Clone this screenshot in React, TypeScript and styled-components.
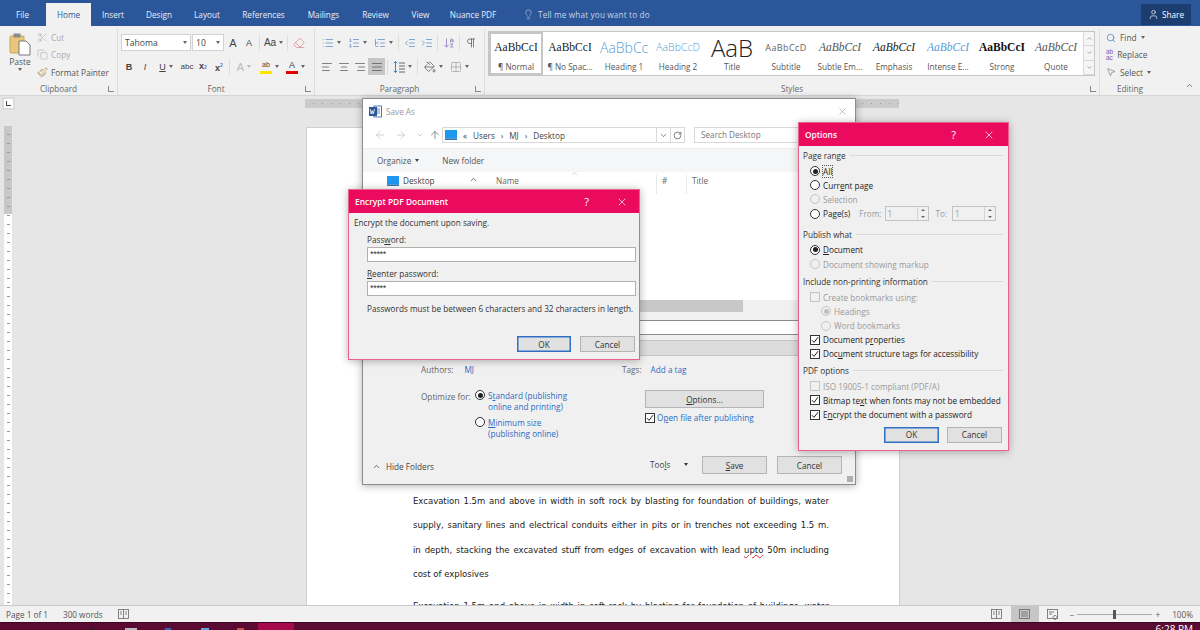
import React from 'react';
import styled, { createGlobalStyle } from 'styled-components';
import {
  AlignCenter, AlignJustify, AlignLeft, AlignRight, ArrowDownAZ, ArrowLeft, ArrowRight, ArrowUp,
  ChevronDown, ChevronUp, Copy, Eraser, Grid2x2, IndentDecrease, IndentIncrease, Lightbulb, List,
  ListOrdered, ListTree, MousePointer2, PaintBucket, Paintbrush, Pilcrow, RotateCw, Scissors, Search, User, X,
} from 'lucide-react';

const UI = `"Open Sans", "Noto Sans", sans-serif`;
const SERIF = `"Liberation Serif", serif`;
const PINK = '#ea0a5e';

const Global = createGlobalStyle`
  html, body { margin: 0; padding: 0; overflow: hidden; background: #e6e6e6; }
  * { box-sizing: border-box; }
  u { text-underline-offset: 1px; text-decoration-thickness: 1px; }
`;

const Shell = styled.div`
  position: relative;
  width: 1200px;
  height: 630px;
  display: flex;
  flex-direction: column;
  overflow: hidden;
  font-family: ${UI};
  color: #333;
`;

/* tabs */
const TabBar = styled.div`
  height: 26px;
  flex: none;
  background: #2b579a;
  display: flex;
  align-items: flex-end;
  padding-left: 15px;
  font-size: 8.2px;
  color: #e8eef7;
`;
const Tab = styled.div<{ $active?: boolean; $w: number }>`
  width: ${p => p.$w}px;
  height: ${p => (p.$active ? 23 : 26)}px;
  display: flex;
  align-items: center;
  justify-content: center;
  flex: none;
  padding-top: ${p => (p.$active ? 0 : 3)}px;
  ${p => p.$active && 'background:#f1f1f1;color:#2b579a;'}
`;
const TellMe = styled.div`
  margin-left: 18px;
  height: 26px;
  padding-top: 3px;
  display: flex;
  align-items: center;
  gap: 4px;
  letter-spacing: .15px;
  color: #c6d3e8;
`;
const ShareBtn = styled.div`
  margin-left: auto;
  margin-right: 9px;
  width: 50px;
  height: 21px;
  margin-bottom: 1px;
  background: #1b3d70;
  display: flex;
  align-items: center;
  justify-content: center;
  gap: 3px;
  color: #fff;
`;

/* ribbon */
const Ribbon = styled.div`
  position: relative;
  height: 70px;
  flex: none;
  background: #f1f1f1;
  border-bottom: 1px solid #d4d4d4;
  display: flex;
  font-size: 8.3px;
  color: #555;
`;
const Group = styled.div<{ $w: number; $noline?: boolean }>`
  width: ${p => p.$w}px;
  flex: none;
  position: relative;
  margin: 3px 0 0;
  display: flex;
  flex-direction: column;
  border-right: ${p => (p.$noline ? 'none' : '1px solid #dcdcdc')};
`;
const GroupBody = styled.div`
  flex: 1;
  min-height: 0;
  display: flex;
`;
const GroupLabel = styled.div`
  height: 14px;
  text-align: center;
  font-size: 8.2px;
  line-height: 15px;
  color: #666;
`;
const Launcher = styled.span`
  position: absolute;
  right: 3px;
  bottom: 3px;
  width: 6px;
  height: 6px;
  border-left: 1px solid #888;
  border-bottom: 1px solid #888;
`;
const PasteCol = styled.div`
  width: 34px;
  margin-left: 3px;
  display: flex;
  flex-direction: column;
  align-items: center;
  padding-top: 3px;
  font-size: 8.4px;
  line-height: 12px;
`;
const ClipCol = styled.div`
  display: flex;
  flex-direction: column;
  padding-top: 0;
`;
const ClipItem = styled.div<{ $off?: boolean }>`
  height: 17.5px;
  display: flex;
  align-items: center;
  gap: 3px;
  color: ${p => (p.$off ? '#aaa' : '#555')};
`;
const ToolCol = styled.div`
  display: flex;
  flex-direction: column;
  padding: 5px 0 0 3px;
  gap: 7px;
`;
const ToolRow = styled.div`
  display: flex;
  align-items: center;
  height: 17px;
`;
const Combo = styled.div<{ $w: number }>`
  width: ${p => p.$w}px;
  height: 17px;
  flex: none;
  margin-right: 1px;
  background: #fff;
  border: 1px solid #d2d2d2;
  display: flex;
  align-items: center;
  justify-content: space-between;
  padding: 0 3px;
  font-size: 8.6px;
  color: #444;
`;
const Caret = styled.span<{ $c?: string }>`
  display: inline-block;
  width: 0;
  height: 0;
  flex: none;
  border-left: 2.5px solid transparent;
  border-right: 2.5px solid transparent;
  border-top: 3px solid ${p => p.$c || '#666'};
`;
const Tool = styled.div<{ $w?: number; $active?: boolean }>`
  width: ${p => p.$w || 16}px;
  height: 17px;
  flex: none;
  display: flex;
  align-items: center;
  justify-content: center;
  gap: 3px;
  color: #444;
  font-size: 9px;
  background: ${p => (p.$active ? '#c6c6c6' : 'transparent')};
`;
const Letter = styled.span<{ $b?: boolean; $i?: boolean; $u?: boolean; $s?: number; $c?: string }>`
  font-family: "Liberation Sans", sans-serif;
  font-size: ${p => p.$s || 9}px;
  font-weight: ${p => (p.$b ? 700 : 400)};
  font-style: ${p => (p.$i ? 'italic' : 'normal')};
  text-decoration: ${p => (p.$u ? 'underline' : 'none')};
  color: ${p => p.$c || '#444'};
  line-height: 10px;
`;
const Tiny = styled.span`
  font-size: 5px;
  color: #4a7cc0;
`;
const Swatch = styled.div<{ $c: string }>`
  display: flex;
  flex-direction: column;
  align-items: center;
  width: 12px;
  &::after { content: ''; width: 12px; height: 3px; margin-top: 1px; background: ${p => p.$c}; }
`;
const ToolSep = styled.div`
  width: 1px;
  height: 16px;
  flex: none;
  background: #dcdcdc;
  margin: 0 2px;
`;
const Gallery = styled.div`
  margin: 2px 0 0 3px;
  width: 607px;
  height: 45px;
  display: flex;
  background: #fff;
  border: 1px solid #c6c6c6;
`;
const StyleCell = styled.div<{ $active?: boolean }>`
  width: 54px;
  flex: none;
  overflow: hidden;
  display: flex;
  flex-direction: column;
  align-items: center;
  border: ${p => (p.$active ? '2px solid #c6c6c6' : '2px solid transparent')};
`;
const Sample = styled.div<{ $f: string; $s: number; $c: string; $i?: boolean; $b?: boolean; $sp?: number; $light?: boolean }>`
  height: 25px;
  width: 48px;
  overflow: hidden;
  white-space: nowrap;
  text-align: center;
  font-family: ${p => p.$f};
  font-size: ${p => p.$s}px;
  color: ${p => p.$c};
  font-style: ${p => (p.$i ? 'italic' : 'normal')};
  font-weight: ${p => (p.$b ? 700 : p.$light ? 300 : 400)};
  letter-spacing: ${p => p.$sp || 0}px;
  line-height: 25px;
  margin-top: 1px;
`;
const StyleName = styled.div`
  font-size: 8.2px;
  color: #555;
  white-space: nowrap;
  line-height: 13px;
`;
const GalleryScroll = styled.div`
  margin-left: auto;
  width: 11px;
  display: flex;
  flex-direction: column;
  color: #777;
  background: #f5f5f5;
  border-left: 1px solid #d8d8d8;
`;
const ScrollCell = styled.div`
  flex: 1;
  display: flex;
  align-items: center;
  justify-content: center;
  border-bottom: 1px solid #d8d8d8;
`;
const EditCol = styled.div`
  display: flex;
  flex-direction: column;
  padding: 0 0 0 6px;
`;
const EditItem = styled.div`
  height: 17.5px;
  display: flex;
  align-items: center;
  gap: 4px;
  color: #555;
`;
const AbStack = styled.span`
  display: flex;
  flex-direction: column;
  font-family: "Liberation Sans", sans-serif;
  font-size: 6.5px;
  line-height: 6px;
  color: #7a5cb0;
`;
const Collapse = styled.div`
  position: absolute;
  right: 6px;
  bottom: 5px;
  color: #555;
  display: flex;
`;

/* workspace */
const Workspace = styled.div`
  flex: 1;
  min-height: 0;
  background: #e6e6e6;
  display: flex;
  flex-direction: column;
  overflow: hidden;
`;
const RulerRow = styled.div`
  height: 14px;
  flex: none;
  display: flex;
  align-items: center;
  padding-left: 2px;
`;
const CornerBox = styled.div`
  width: 13px;
  height: 13px;
  background: #fff;
  border: 2px solid #dcdcdc;
  display: flex;
  align-items: flex-end;
  justify-content: center;
  padding-bottom: 2px;
  &::after { content: ''; width: 4px; height: 4px; border-left: 1px solid #444; border-bottom: 1px solid #444; }
`;
const HRuler = styled.div`
  margin-left: 290px;
  width: 594px;
  height: 9px;
  background:
    repeating-linear-gradient(90deg, transparent 0 8px, #9a9a9a 8px 9px) 0 4px / 100% 1px no-repeat,
    #cbcbcb;
`;
const DocRow = styled.div`
  flex: 1;
  min-height: 0;
  display: flex;
`;
const VRuler = styled.div`
  margin: 16px 0 0 4px;
  width: 8px;
  flex: none;
  background:
    repeating-linear-gradient(180deg, transparent 0 8px, #9a9a9a 8px 9px) 3px 0 / 3px 100% no-repeat,
    linear-gradient(180deg, #c8c8c8 0 88px, #fff 88px);
`;
const Page = styled.div`
  margin: 17px 0 0 294px;
  width: 594px;
  flex: none;
  background: #fff;
  border: 1px solid #d0d0d0;
  border-bottom: none;
  padding: 361px 70px 0 106px;
  font-family: "DejaVu Sans", sans-serif;
  font-size: 8.5px;
  line-height: 24.4px;
  color: #222;
  overflow: hidden;
`;
const Para = styled.p`
  margin: 0 0 7px;
`;
const Line = styled.span<{ $last?: boolean }>`
  display: block;
  text-align: ${p => (p.$last ? 'left' : 'justify')};
  text-align-last: ${p => (p.$last ? 'left' : 'justify')};
`;
const Squiggle = styled.span`
  text-decoration: underline wavy #d22;
  text-decoration-thickness: 1px;
`;

/* status + taskbar */
const StatusBar = styled.div`
  height: 17px;
  flex: none;
  background: #f1f1f1;
  border-top: 1px solid #c8c8c8;
  display: flex;
  align-items: center;
  padding-left: 6px;
  font-size: 8.2px;
  color: #555;
`;
const StatusItem = styled.span<{ $ml?: number; $mr?: number }>`
  display: flex;
  margin-left: ${p => p.$ml || 0}px;
  margin-right: ${p => p.$mr || 0}px;
`;
const StatusRight = styled.div`
  margin-left: auto;
  display: flex;
  align-items: center;
  height: 100%;
`;
const ViewBtn = styled.div<{ $active?: boolean }>`
  width: 28px;
  height: 100%;
  display: flex;
  align-items: center;
  justify-content: center;
  background: ${p => (p.$active ? '#c6c6c6' : 'transparent')};
`;
const ZoomTrack = styled.div`
  position: relative;
  width: 75px;
  height: 1px;
  background: #aaa;
  margin: 0 3px;
  &::after { content: ''; position: absolute; left: 36px; top: -4px; width: 3px; height: 9px; background: #555; }
`;
const Taskbar = styled.div`
  height: 8px;
  flex: none;
  background: #5a0a33;
  border-top: 1px solid #3d0722;
  display: flex;
  align-items: flex-start;
  font-size: 10px;
  color: #fff;
`;
const TaskDot = styled.span<{ $ml: number; $w: number; $c: string }>`
  margin: 5px 0 0 ${p => p.$ml}px;
  width: ${p => p.$w}px;
  height: 2px;
  flex: none;
  background: ${p => p.$c};
`;
const TaskActive = styled.div`
  margin-left: 14px;
  width: 36px;
  height: 8px;
  position: relative;
  background: #a60a4c;
`;
const Clock = styled.div`
  margin-left: auto;
  margin-right: 7px;
  line-height: 13px;
`;

/* windows */
const Win = styled.div<{ $x: number; $y: number; $w: number; $h: number; $pink?: boolean }>`
  position: absolute;
  left: ${p => p.$x}px;
  top: ${p => p.$y}px;
  width: ${p => p.$w}px;
  height: ${p => p.$h}px;
  background: #f0f0f0;
  border: 1px solid ${p => (p.$pink ? '#e8628a' : '#8d8d8d')};
  box-shadow: 0 1px 8px rgba(0, 0, 0, .3);
  display: flex;
  flex-direction: column;
  font-size: 8.2px;
  color: #333;
  overflow: hidden;
`;
const PinkBar = styled.div`
  height: 23px;
  flex: none;
  background: ${PINK};
  color: #fff;
  display: flex;
  align-items: center;
  padding-left: 6px;
  font-size: 8.4px;
  font-weight: 600;
`;
const BarHelp = styled.span<{ $mr: number }>`
  margin-left: auto;
  margin-right: ${p => p.$mr}px;
  font-size: 11px;
  font-weight: 400;
`;
const BarClose = styled.span<{ $mr: number }>`
  display: flex;
  margin-right: ${p => p.$mr}px;
`;
const Btn = styled.div<{ $w: number; $h?: number; $def?: boolean }>`
  width: ${p => p.$w}px;
  height: ${p => p.$h || 16}px;
  flex: none;
  background: #e1e1e1;
  border: ${p => (p.$def ? '1px solid #2f6fc4' : '1px solid #b4b4b4')};
  box-shadow: ${p => (p.$def ? 'inset 0 0 0 .5px #2f6fc4' : 'none')};
  display: flex;
  align-items: center;
  justify-content: center;
  color: #333;
`;

/* encrypt */
const EncBody = styled.div`
  flex: 1;
  padding: 4px 4px 0 5px;
  display: flex;
  flex-direction: column;
`;
const EncFields = styled.div`
  padding: 6px 0 0 13px;
  display: flex;
  flex-direction: column;
`;
const Label = styled.div`
  line-height: 12px;
`;
const PwInput = styled.div`
  width: 269px;
  height: 15px;
  margin: 1px 0 6px;
  background: #fff;
  border: 1px solid #b0b0b0;
  padding-left: 2px;
  font-family: "Liberation Sans", sans-serif;
  font-size: 9px;
  line-height: 13px;
  letter-spacing: -.3px;
`;
const Note = styled.div`
  margin-top: 1px;
  white-space: nowrap;
`;
const BtnRow = styled.div<{ $gap: number; $mr: number; $mt: number }>`
  display: flex;
  justify-content: flex-end;
  gap: ${p => p.$gap}px;
  margin: ${p => p.$mt}px ${p => p.$mr}px 0 0;
`;

/* options */
const OptBody = styled.div`
  flex: 1;
  padding: 3px 5px 0 4px;
  display: flex;
  flex-direction: column;
`;
const Legend = styled.div<{ $mt?: number }>`
  display: flex;
  align-items: center;
  gap: 4px;
  height: 13px;
  margin: ${p => p.$mt || 0}px 0 2px;
  white-space: nowrap;
  &::after { content: ''; flex: 1; height: 1px; background: #d8d8d8; }
`;
const OptRow = styled.div<{ $in?: number; $off?: boolean }>`
  height: 14.2px;
  display: flex;
  align-items: center;
  gap: 3px;
  padding-left: ${p => p.$in ?? 7}px;
  white-space: nowrap;
  color: ${p => (p.$off ? '#9a9a9a' : '#222')};
`;
const Radio = styled.span<{ $on?: boolean; $off?: boolean; $dim?: boolean }>`
  width: 10px;
  height: 10px;
  flex: none;
  border-radius: 50%;
  background: ${p => (p.$off ? '#f0f0f0' : '#fff')};
  border: 1px solid ${p => (p.$off ? '#c4c4c4' : '#333')};
  display: flex;
  align-items: center;
  justify-content: center;
  &::after {
    content: '';
    width: 5px;
    height: 5px;
    border-radius: 50%;
    background: ${p => (p.$on ? (p.$dim ? '#c0c0c0' : '#222') : 'transparent')};
  }
`;
const Check = styled.span<{ $off?: boolean }>`
  width: 10px;
  height: 10px;
  flex: none;
  background: ${p => (p.$off ? '#f0f0f0' : '#fff')};
  border: 1px solid ${p => (p.$off ? '#c4c4c4' : '#333')};
  display: flex;
  align-items: center;
  justify-content: center;
`;
const FocusText = styled.span`
  outline: 1px dotted #555;
`;
const SpinLabel = styled.span<{ $ml: number }>`
  color: #9a9a9a;
  margin-left: ${p => p.$ml}px;
`;
const Spin = styled.div<{ $ml?: number }>`
  width: 44px;
  height: 15px;
  margin-left: ${p => p.$ml || 0}px;
  background: #f0f0f0;
  border: 1px solid #c4c4c4;
  color: #9a9a9a;
  display: flex;
  align-items: center;
  padding-left: 2px;
`;
const SpinBtns = styled.span`
  margin-left: auto;
  width: 11px;
  height: 100%;
  display: flex;
  flex-direction: column;
  border-left: 1px solid #d4d4d4;
`;
const SpinBtn = styled.span<{ $up?: boolean }>`
  flex: 1;
  display: flex;
  align-items: center;
  justify-content: center;
  &::after {
    content: '';
    border-left: 2px solid transparent;
    border-right: 2px solid transparent;
    ${p => (p.$up ? 'border-bottom: 2.5px solid #666;' : 'border-top: 2.5px solid #666;')}
  }
`;

/* save as */
const SaveTitle = styled.div`
  height: 25px;
  flex: none;
  background: #fff;
  display: flex;
  align-items: center;
  padding-left: 6px;
  gap: 4px;
  color: #999;
`;
const SaveClose = styled.span`
  margin-left: auto;
  margin-right: 7px;
  display: flex;
  color: #777;
`;
const AddrRow = styled.div`
  height: 24px;
  flex: none;
  background: #fff;
  display: flex;
  align-items: center;
  padding: 0 0 2px 7px;
  color: #bbb;
`;
const NavBtn = styled.span<{ $w: number; $c?: string }>`
  width: ${p => p.$w}px;
  flex: none;
  display: flex;
  justify-content: center;
  color: ${p => p.$c || '#bbb'};
`;
const AddrBox = styled.div`
  width: 243px;
  height: 16px;
  flex: none;
  border: 1px solid #d9d9d9;
  display: flex;
  align-items: center;
  gap: 6px;
  padding-left: 2px;
  color: #444;
`;
const AddrEnd = styled.span<{ $auto?: boolean }>`
  margin-left: ${p => (p.$auto ? 'auto' : '-6px')};
  width: 14px;
  height: 100%;
  display: flex;
  align-items: center;
  justify-content: center;
  color: #555;
  border-left: 1px solid #d9d9d9;
`;
const SearchBox = styled.div`
  margin-left: 9px;
  width: 120px;
  height: 16px;
  border: 1px solid #d9d9d9;
  color: #777;
  padding-left: 6px;
  line-height: 14px;
`;
const OrgBar = styled.div`
  height: 24px;
  flex: none;
  background: #f5f6f7;
  border-top: 1px solid #eee;
  display: flex;
  align-items: center;
  padding-left: 14px;
  color: #555;
`;
const OrgItem = styled.span<{ $ml?: number }>`
  display: flex;
  align-items: center;
  gap: 4px;
  margin-left: ${p => p.$ml || 0}px;
`;
const FileList = styled.div`
  height: 128px;
  flex: none;
  background: #fff;
  display: flex;
  align-items: flex-start;
  padding-top: 3px;
  color: #555;
`;
const TreeItem = styled.div`
  position: relative;
  margin-left: 24px;
  width: 104px;
  display: flex;
  align-items: center;
  gap: 4px;
  color: #444;
`;
const TreeChevron = styled.span`
  position: absolute;
  left: 82px;
  top: 0;
  display: flex;
  color: #444;
`;
const ColHead = styled.div<{ $w: number }>`
  position: relative;
  width: ${p => p.$w}px;
  flex: none;
  padding: 0 0 0 5px;
  height: 19px;
  color: #666;
  border-right: 1px solid #e8e8e8;
`;
const SortMark = styled.span`
  position: absolute;
  left: 79px;
  top: -6px;
  display: flex;
  color: #888;
`;
const HScroll = styled.div`
  height: 12px;
  flex: none;
  padding-left: 130px;
  background: #f0f0f0;
  &::after { content: ''; display: block; width: 250px; height: 12px; background: #c8c8c8; }
`;
const FormArea = styled.div`
  flex: 1;
  min-height: 0;
  display: flex;
  flex-direction: column;
  color: #666;
`;
const NameField = styled.div`
  height: 15px;
  margin: 8px 11px 0 110px;
  background: #fff;
  border: 1px solid #8c8c8c;
  border-width: 1px 0 1px 1px;
`;
const TypeField = styled.div`
  height: 16px;
  margin: 5px 11px 0 110px;
  background: #dcdcdc;
  border: 1px solid #c4c4c4;
`;
const MetaRow = styled.div`
  display: flex;
  height: 14px;
  margin-top: 6px;
  padding-left: 58px;
  align-items: center;
`;
const TagLabel = styled.span`
  margin-left: 148px;
`;
const Link = styled.span<{ $ml?: number }>`
  color: #2b6cc4;
  margin-left: ${p => p.$ml || 0}px;
  white-space: nowrap;
`;
const OptimizeRow = styled.div`
  display: flex;
  margin-top: 14px;
  padding-left: 58px;
`;
const OptLabel = styled.div`
  width: 54px;
  flex: none;
  line-height: 11px;
  padding-top: 1px;
  white-space: nowrap;
`;
const OptChoices = styled.div`
  width: 170px;
  flex: none;
  display: flex;
  flex-direction: column;
  gap: 4px;
`;
const Choice = styled.div`
  display: flex;
  gap: 3px;
  line-height: 11.3px;
  color: #2b6cc4;
`;
const OptRight = styled.div`
  display: flex;
  flex-direction: column;
  gap: 4px;
`;
const CheckLine = styled.div`
  display: flex;
  align-items: center;
  gap: 2px;
`;
const SaveFooter = styled.div`
  margin-top: auto;
  height: 28px;
  display: flex;
  align-items: flex-start;
  padding-left: 9px;
  position: relative;
`;
const HideFolders = styled.div`
  display: flex;
  align-items: center;
  gap: 5px;
  color: #444;
  margin-top: 5px;
  width: 278px;
`;
const ToolsItem = styled.div`
  width: 52px;
  display: flex;
  align-items: center;
  justify-content: space-between;
  height: 16px;
  padding-right: 14px;
  color: #444;
`;
const FooterBtns = styled.div`
  display: flex;
  gap: 10px;
`;
const Grip = styled.span`
  position: absolute;
  right: 2px;
  bottom: 2px;
  width: 6px;
  height: 6px;
  background: radial-gradient(circle, #aaa .7px, transparent .8px) 0 0 / 2px 2px;
`;

const CheckMark = () => (
  <svg width="8" height="8" viewBox="0 0 8 8"><path d="M1 4.2 3 6.4 7 1.2" fill="none" stroke="#222" strokeWidth="1" /></svg>
);
const Tick = ({ off, on = true }: { off?: boolean; on?: boolean }) => <Check $off={off}>{on && <CheckMark />}</Check>;

const PasteIcon = () => (
  <svg width="22" height="24" viewBox="0 0 22 24">
    <rect x="1" y="4" width="14" height="17" rx="1" fill="#e8c67c" stroke="#c9a55c" />
    <rect x="4.5" y="1.5" width="7" height="4" fill="#8a8a8a" />
    <path d="M10 9h7l4 4v10H10z" fill="#fff" stroke="#777" />
  </svg>
);
const WordIcon = () => (
  <svg width="13" height="13" viewBox="0 0 13 13">
    <rect x="5" y="1" width="7.5" height="11" fill="#fff" stroke="#2b579a" strokeWidth=".8" />
    <path d="M7 4h4M7 6h4M7 8h4" stroke="#2b579a" strokeWidth=".7" />
    <rect x="0" y="2" width="8" height="9" fill="#2b579a" />
    <path d="M1.2 4l1 5 1-3.4 1 3.4 1.4-5" fill="none" stroke="#fff" strokeWidth=".8" />
  </svg>
);
const DesktopIcon = ({ w = 12 }: { w?: number }) => (
  <svg width={w} height="10" viewBox="0 0 16 11" preserveAspectRatio="none">
    <rect width="16" height="9.5" fill="#1e97ef" />
    <rect y="9.5" width="16" height="1.5" fill="#3a6ea5" />
  </svg>
);
const LineSpacingIcon = () => (
  <svg width="12" height="14" viewBox="0 0 12 14" fill="none">
    <path d="M2.5 1.5v11M.8 3.2l1.7-1.8 1.7 1.8M.8 10.8l1.7 1.8 1.7-1.8" stroke="#4a7cc0" strokeWidth="1" />
    <path d="M6 3h6M6 6h6M6 9h6M6 12h6" stroke="#666" strokeWidth="1" />
  </svg>
);
const PageViewIcon = ({ kind }: { kind: 'read' | 'print' | 'web' }) => (
  <svg width="13" height="11" viewBox="0 0 13 11" fill="none" stroke="#666" strokeWidth=".8">
    <rect x="1.5" y=".5" width="10" height="9" />
    {kind === 'read' && <path d="M6.5 .5v9M3 3h2M3 5h2M8 3h2M8 5h2" />}
    {kind === 'print' && <path d="M3 3h7M3 5h7M3 7h7" />}
    {kind === 'web' && <path d="M3 3h5M3 5h3M9 6.5a2 2 0 1 0 .1 0" />}
  </svg>
);

const styleList = [
  { s: 'AaBbCcI', n: '¶ Normal', f: SERIF, z: 11.5, c: '#222', active: true },
  { s: 'AaBbCcI', n: '¶ No Spac...', f: SERIF, z: 11.5, c: '#222' },
  { s: 'AaBbCc', n: 'Heading 1', f: UI, z: 14, c: '#5b9bd5', light: true },
  { s: 'AaBbCcD', n: 'Heading 2', f: UI, z: 10.5, c: '#5b9bd5', light: true },
  { s: 'AaB', n: 'Title', f: UI, z: 24, c: '#222', light: true },
  { s: 'AaBbCcD', n: 'Subtitle', f: UI, z: 9, c: '#666', sp: 0.4 },
  { s: 'AaBbCcI', n: 'Subtle Em...', f: SERIF, z: 11.5, c: '#555', i: true },
  { s: 'AaBbCcI', n: 'Emphasis', f: SERIF, z: 11.5, c: '#222', i: true },
  { s: 'AaBbCcI', n: 'Intense E...', f: SERIF, z: 11.5, c: '#5b9bd5', i: true },
  { s: 'AaBbCcI', n: 'Strong', f: SERIF, z: 11.5, c: '#111', b: true },
  { s: 'AaBbCcI', n: 'Quote', f: SERIF, z: 11.5, c: '#555', i: true },
];

const tabs: [string, number][] = [
  ['Insert', 44], ['Design', 48], ['Layout', 48], ['References', 65], ['Mailings', 55],
  ['Review', 49], ['View', 41], ['Nuance PDF', 64],
];

const taskDots = [
  { ml: 90, w: 3, c: '#222' },
  { ml: 32, w: 12, c: '#bbb' },
  { ml: 28, w: 6, c: '#3a5fa8' },
  { ml: 30, w: 8, c: '#5ba8d8' },
  { ml: 28, w: 7, c: '#c8504a' },
];

const ic = { size: 12, strokeWidth: 1.3 };
const xIcon = { size: 12, strokeWidth: 1.4 };

export default function App() {
  return (
    <Shell>
      <Global />
      <TabBar>
        <Tab $w={15}>File</Tab>
        <Tab $w={16} />
        <Tab $w={45} $active>Home</Tab>
        {tabs.map(([t, w]) => <Tab key={t} $w={w}>{t}</Tab>)}
        <TellMe><Lightbulb size={11} strokeWidth={1.2} />Tell me what you want to do</TellMe>
        <ShareBtn><User size={11} strokeWidth={1.4} />Share</ShareBtn>
      </TabBar>

      <Ribbon>
        <Group $w={118}>
          <GroupBody>
            <PasteCol><PasteIcon />Paste<Caret /></PasteCol>
            <ClipCol>
              <ClipItem $off><Scissors size={11} strokeWidth={1.2} />Cut</ClipItem>
              <ClipItem $off><Copy size={11} strokeWidth={1.2} />Copy</ClipItem>
              <ClipItem><Paintbrush size={11} strokeWidth={1.3} color="#a88030" />Format Painter</ClipItem>
            </ClipCol>
          </GroupBody>
          <GroupLabel>Clipboard</GroupLabel>
          <Launcher />
        </Group>

        <Group $w={197}>
          <GroupBody>
            <ToolCol>
              <ToolRow>
                <Combo $w={70}>Tahoma<Caret /></Combo>
                <Combo $w={32}>10<Caret /></Combo>
                <Tool><Letter $s={11}>A</Letter></Tool>
                <Tool><Letter $s={9}>A</Letter></Tool>
                <ToolSep />
                <Tool $w={23}><Letter $s={10}>Aa</Letter><Caret /></Tool>
                <ToolSep />
                <Tool $w={17}><Eraser size={12} strokeWidth={1.2} color="#d9707a" /></Tool>
              </ToolRow>
              <ToolRow>
                <Tool><Letter $b>B</Letter></Tool>
                <Tool><Letter $i>I</Letter></Tool>
                <Tool $w={26}><Letter $u>U</Letter><Caret /></Tool>
                <Tool><Letter $s={8}>abc</Letter></Tool>
                <Tool><Letter $b>x<Tiny>2</Tiny></Letter></Tool>
                <Tool><Letter $b>x<sup><Tiny>2</Tiny></sup></Letter></Tool>
                <ToolSep />
                <Tool $w={24}><Letter $s={11} $c="#bbb">A</Letter><Caret $c="#bbb" /></Tool>
                <Tool $w={27}><Swatch $c="#ffe600"><Letter $s={7}>ab</Letter></Swatch><Caret /></Tool>
                <Tool $w={25}><Swatch $c="#e00000"><Letter $s={9}>A</Letter></Swatch><Caret /></Tool>
              </ToolRow>
            </ToolCol>
          </GroupBody>
          <GroupLabel>Font</GroupLabel>
          <Launcher />
        </Group>

        <Group $w={170}>
          <GroupBody>
            <ToolCol>
              <ToolRow>
                <Tool $w={27}><List {...ic} color="#4a7cc0" /><Caret /></Tool>
                <Tool $w={25}><ListOrdered {...ic} color="#4a7cc0" /><Caret /></Tool>
                <Tool $w={26}><ListTree {...ic} color="#4a7cc0" /><Caret /></Tool>
                <ToolSep />
                <Tool $w={17}><IndentDecrease {...ic} color="#4a7cc0" /></Tool>
                <Tool $w={17}><IndentIncrease {...ic} color="#4a7cc0" /></Tool>
                <ToolSep />
                <Tool $w={17}><ArrowDownAZ {...ic} color="#7a5cb0" /></Tool>
                <ToolSep />
                <Tool $w={17}><Pilcrow {...ic} /></Tool>
              </ToolRow>
              <ToolRow>
                <Tool $w={17}><AlignLeft {...ic} /></Tool>
                <Tool $w={17}><AlignCenter {...ic} /></Tool>
                <Tool $w={16}><AlignRight {...ic} /></Tool>
                <Tool $w={17} $active><AlignJustify {...ic} /></Tool>
                <ToolSep />
                <Tool $w={25}><LineSpacingIcon /><Caret /></Tool>
                <ToolSep />
                <Tool $w={27}><PaintBucket {...ic} /><Caret /></Tool>
                <Tool $w={25}><Grid2x2 {...ic} color="#999" /><Caret /></Tool>
              </ToolRow>
            </ToolCol>
          </GroupBody>
          <GroupLabel>Paragraph</GroupLabel>
          <Launcher />
        </Group>

        <Group $w={615}>
          <GroupBody>
            <Gallery>
              {styleList.map(st => (
                <StyleCell key={st.n} $active={st.active}>
                  <Sample $f={st.f} $s={st.z} $c={st.c} $i={st.i} $b={st.b} $sp={st.sp} $light={st.light}>{st.s}</Sample>
                  <StyleName>{st.n}</StyleName>
                </StyleCell>
              ))}
              <GalleryScroll>
                <ScrollCell><ChevronUp size={7} /></ScrollCell>
                <ScrollCell><ChevronDown size={7} /></ScrollCell>
                <ScrollCell><ChevronDown size={7} /></ScrollCell>
              </GalleryScroll>
            </Gallery>
          </GroupBody>
          <GroupLabel>Styles</GroupLabel>
          <Launcher />
        </Group>

        <Group $w={60} $noline>
          <GroupBody>
            <EditCol>
              <EditItem><Search size={10} strokeWidth={1.5} color="#2b6cc4" />Find<Caret /></EditItem>
              <EditItem><AbStack><span>ab</span><span>ac</span></AbStack>Replace</EditItem>
              <EditItem><MousePointer2 size={10} strokeWidth={1.2} />Select<Caret /></EditItem>
            </EditCol>
          </GroupBody>
          <GroupLabel>Editing</GroupLabel>
        </Group>
        <Collapse><ChevronUp size={9} strokeWidth={2} /></Collapse>
      </Ribbon>

      <Workspace>
        <RulerRow><CornerBox /><HRuler /></RulerRow>
        <DocRow>
          <VRuler />
          <Page>
            <Para>
              <Line>Excavation 1.5m and above in width in soft rock by blasting for foundation of buildings, water</Line>
              <Line>supply, sanitary lines and electrical conduits either in pits or in trenches not exceeding 1.5 m.</Line>
              <Line>in depth, stacking the excavated stuff from edges of excavation with lead <Squiggle>upto</Squiggle> 50m including</Line>
              <Line $last>cost of explosives</Line>
            </Para>
            <Para>
              <Line>Excavation 1.5m and above in width in soft rock by blasting for foundation of buildings, water</Line>
            </Para>
          </Page>
        </DocRow>
      </Workspace>

      <StatusBar>
        Page 1 of 1
        <StatusItem $ml={15}>300 words</StatusItem>
        <StatusItem $ml={14}><PageViewIcon kind="read" /></StatusItem>
        <StatusRight>
          <ViewBtn><PageViewIcon kind="read" /></ViewBtn>
          <ViewBtn $active><PageViewIcon kind="print" /></ViewBtn>
          <ViewBtn><PageViewIcon kind="web" /></ViewBtn>
          <StatusItem $ml={3}>−</StatusItem>
          <ZoomTrack />
          <StatusItem>+</StatusItem>
          <StatusItem $ml={12} $mr={7}>100%</StatusItem>
        </StatusRight>
      </StatusBar>
      <Taskbar>
        {taskDots.map(d => <TaskDot key={d.ml + d.c} $ml={d.ml} $w={d.w} $c={d.c} />)}
        <TaskActive />
        <Clock>6:28 PM</Clock>
      </Taskbar>

      <Win $x={362} $y={98} $w={494} $h={387}>
        <SaveTitle>
          <WordIcon />Save As
          <SaveClose><X size={11} strokeWidth={1} /></SaveClose>
        </SaveTitle>
        <AddrRow>
          <NavBtn $w={20}><ArrowLeft {...ic} /></NavBtn>
          <NavBtn $w={22}><ArrowRight {...ic} /></NavBtn>
          <NavBtn $w={16}><ChevronDown size={8} /></NavBtn>
          <NavBtn $w={14} $c="#555"><ArrowUp {...ic} /></NavBtn>
          <AddrBox>
            <DesktopIcon /><span>«</span><span>Users</span><span>›</span><span>MJ</span><span>›</span><span>Desktop</span>
            <AddrEnd $auto><ChevronDown size={9} /></AddrEnd>
            <AddrEnd><RotateCw size={9} /></AddrEnd>
          </AddrBox>
          <SearchBox>Search Desktop</SearchBox>
        </AddrRow>
        <OrgBar>
          <OrgItem>Organize<Caret $c="#444" /></OrgItem>
          <OrgItem $ml={23}>New folder</OrgItem>
        </OrgBar>
        <FileList>
          <TreeItem>
            <DesktopIcon />Desktop
            <TreeChevron><ChevronUp size={9} strokeWidth={2} /></TreeChevron>
          </TreeItem>
          <ColHead $w={166}>Name<SortMark><ChevronUp size={9} strokeWidth={1} /></SortMark></ColHead>
          <ColHead $w={30}>#</ColHead>
          <ColHead $w={120}>Title</ColHead>
        </FileList>
        <HScroll />
        <FormArea>
          <NameField />
          <TypeField />
          <MetaRow>
            Authors:<Link $ml={11}>MJ</Link>
            <TagLabel>Tags:</TagLabel><Link $ml={9}>Add a tag</Link>
          </MetaRow>
          <OptimizeRow>
            <OptLabel>Optimize for:</OptLabel>
            <OptChoices>
              <Choice><Radio $on /><span>S<u>t</u>andard (publishing<br />online and printing)</span></Choice>
              <Choice><Radio /><span><u>M</u>inimum size<br />(publishing online)</span></Choice>
            </OptChoices>
            <OptRight>
              <Btn $w={119} $h={18}><span><u>O</u>ptions...</span></Btn>
              <CheckLine><Tick /><Link>O<u>p</u>en file after publishing</Link></CheckLine>
            </OptRight>
          </OptimizeRow>
          <SaveFooter>
            <HideFolders><ChevronUp size={9} strokeWidth={2} />Hide Folders</HideFolders>
            <ToolsItem><span>Too<u>l</u>s</span><Caret $c="#333" /></ToolsItem>
            <FooterBtns>
              <Btn $w={65} $h={18}><span><u>S</u>ave</span></Btn>
              <Btn $w={65} $h={18}>Cancel</Btn>
            </FooterBtns>
            <Grip />
          </SaveFooter>
        </FormArea>
      </Win>

      <Win $x={348} $y={189} $w={292} $h={171} $pink>
        <PinkBar>
          Encrypt PDF Document
          <BarHelp $mr={27}>?</BarHelp>
          <BarClose $mr={11}><X {...xIcon} /></BarClose>
        </PinkBar>
        <EncBody>
          Encrypt the document upon saving.
          <EncFields>
            <Label>Pass<u>w</u>ord:</Label>
            <PwInput>*****</PwInput>
            <Label><u>R</u>eenter password:</Label>
            <PwInput>*****</PwInput>
            <Note>Passwords must be between 6 characters and 32 characters in length.</Note>
          </EncFields>
          <BtnRow $gap={9} $mr={0} $mt={22}>
            <Btn $w={54} $def>OK</Btn>
            <Btn $w={55}>Cancel</Btn>
          </BtnRow>
        </EncBody>
      </Win>

      <Win $x={798} $y={122} $w={211} $h={329} $pink>
        <PinkBar>
          Options
          <BarHelp $mr={27}>?</BarHelp>
          <BarClose $mr={13}><X {...xIcon} /></BarClose>
        </PinkBar>
        <OptBody>
          <Legend>Page range</Legend>
          <OptRow><Radio $on /><FocusText>All</FocusText></OptRow>
          <OptRow><Radio /><span>Curr<u>e</u>nt page</span></OptRow>
          <OptRow $off><Radio $off />Selection</OptRow>
          <OptRow>
            <Radio /><span>Pa<u>g</u>e(s)</span>
            <SpinLabel $ml={6}>From:</SpinLabel>
            <Spin>1<SpinBtns><SpinBtn $up /><SpinBtn /></SpinBtns></Spin>
            <SpinLabel $ml={4}>To:</SpinLabel>
            <Spin $ml={2}>1<SpinBtns><SpinBtn $up /><SpinBtn /></SpinBtns></Spin>
          </OptRow>
          <Legend $mt={7}>Publish what</Legend>
          <OptRow><Radio $on /><span><u>D</u>ocument</span></OptRow>
          <OptRow $off><Radio $off />Document showing markup</OptRow>
          <Legend $mt={4}>Include non-printing information</Legend>
          <OptRow $off><Tick off on={false} />Create bookmarks using:</OptRow>
          <OptRow $off $in={18}><Radio $off $on $dim />Headings</OptRow>
          <OptRow $off $in={18}><Radio $off />Word bookmarks</OptRow>
          <OptRow><Tick /><span>Document p<u>r</u>operties</span></OptRow>
          <OptRow><Tick /><span>Doc<u>u</u>ment structure tags for accessibility</span></OptRow>
          <Legend $mt={3}>PDF options</Legend>
          <OptRow $off><Tick off on={false} />ISO 19005-1 compliant (PDF/A)</OptRow>
          <OptRow><Tick /><span>Bitmap te<u>x</u>t when fonts may not be embedded</span></OptRow>
          <OptRow><Tick /><span>E<u>n</u>crypt the document with a password</span></OptRow>
          <BtnRow $gap={8} $mr={1} $mt={5}>
            <Btn $w={55} $def>OK</Btn>
            <Btn $w={55}>Cancel</Btn>
          </BtnRow>
        </OptBody>
      </Win>
    </Shell>
  );
}
